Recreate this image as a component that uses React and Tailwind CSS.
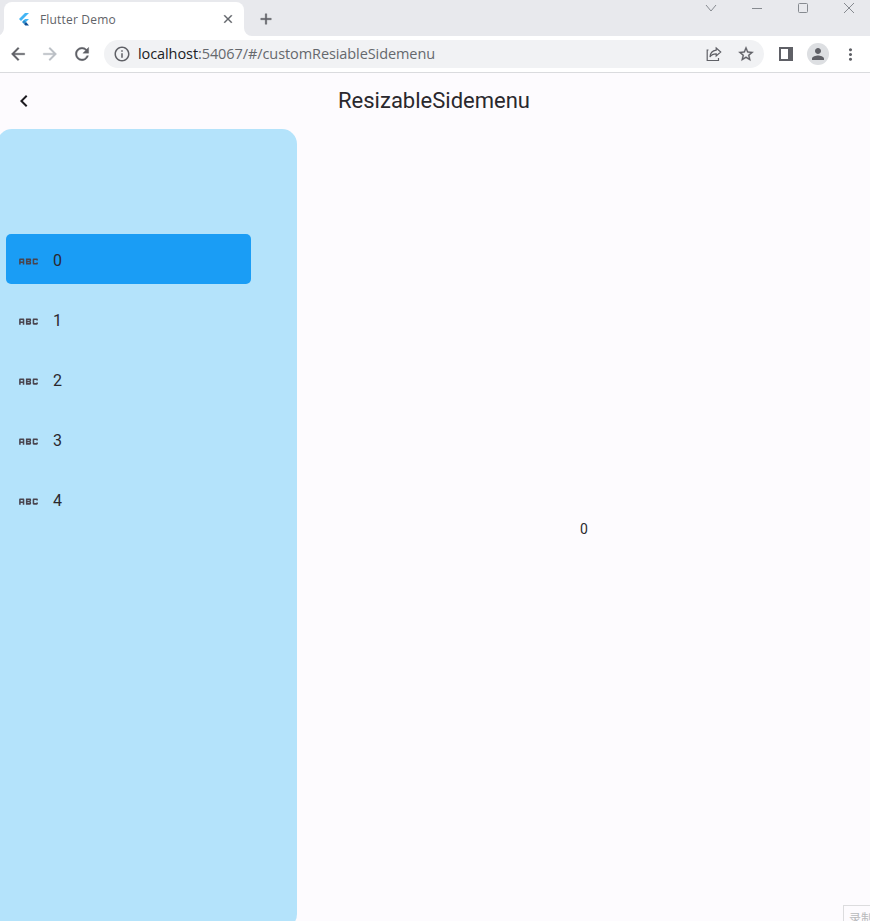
import React from "react";
import {
  MdAbc, MdAdd, MdArrowBack, MdArrowForward, MdChevronLeft, MdClose,
  MdInfoOutline, MdMoreVert, MdPerson, MdRefresh, MdStarBorder,
} from "react-icons/md";

const items = ["0", "1", "2", "3", "4"];

function FlutterLogo() {
  return (
    <svg className="h-[13px] w-[10px]" viewBox="0 0 10 13">
      <path d="M6 0h4L2 8 0 6z" fill="#42b5f5" />
      <path d="M6 6h4L6.5 9.5l-2-2z" fill="#42b5f5" />
      <path d="M3 9l2-2 2 2-2 2z" fill="#2a8fd0" />
      <path d="M5 11l2-2 3 3.500H6.300z" fill="#0d4f96" />
    </svg>
  );
}

function WindowControls() {
  return (
    <div className="flex h-4 w-[165px] items-center gap-[34px] text-[#868a90]">
      <svg className="h-4 w-3 shrink-0" viewBox="0 0 12 16" fill="none" stroke="currentColor">
        <path d="M1 5l5 6 5-6" />
      </svg>
      <svg className="h-4 w-3 shrink-0" viewBox="0 0 12 16" fill="none" stroke="currentColor">
        <path d="M1 8.500h10" />
      </svg>
      <svg className="h-4 w-3 shrink-0" viewBox="0 0 12 16" fill="none" stroke="currentColor">
        <rect x="1.500" y="3.500" width="9" height="9" rx="1" />
      </svg>
      <svg className="h-4 w-3 shrink-0" viewBox="0 0 12 16" fill="none" stroke="currentColor">
        <path d="M1 3l10 10M11 3L1 13" />
      </svg>
    </div>
  );
}

function TabStrip() {
  return (
    <div className="flex h-9 shrink-0 items-start bg-[#e8e9ed]">
      <svg className="mt-7 h-2 w-1 shrink-0" viewBox="4 0 4 8">
        <path d="M8 0v8H0a8 8 0 0 0 8-8z" fill="#fff" />
      </svg>
      <div className="mt-0.5 flex h-[34px] w-60 shrink-0 items-center rounded-t-lg bg-white pl-[15px] pr-[9px]">
        <FlutterLogo />
        <span className="ml-[11px] mt-0.5 whitespace-nowrap font-['Open_Sans','Noto_Sans',sans-serif] text-[12px] tracking-[0.18px] text-[#5f6368]">
          Flutter Demo
        </span>
        <MdClose className="ml-auto size-[14px] stroke-[0.6] text-[#5f6368] [&_[fill=none]]:hidden" />
      </div>
      <svg className="mt-7 h-2 w-2 shrink-0" viewBox="0 0 8 8">
        <path d="M0 0v8h8a8 8 0 0 1-8-8z" fill="#fff" />
      </svg>
      <MdAdd className="ml-[5px] mt-[10px] size-[18px] stroke-[0.5] text-[#5f6066] [&_[fill=none]]:hidden" />
      <div className="ml-auto">
        <WindowControls />
      </div>
    </div>
  );
}

function Toolbar() {
  return (
    <div className="flex h-[37px] shrink-0 items-center border-b border-[#dadbde] bg-white pl-2 text-[#5f6066]">
      <MdArrowBack className="size-5 stroke-[0.4] [&_[fill=none]]:hidden" />
      <MdArrowForward className="ml-3 size-5 stroke-[0.4] text-[#babec4] [&_[fill=none]]:hidden" />
      <MdRefresh className="ml-3 size-5 stroke-[0.4] [&_[fill=none]]:hidden" />
      <div className="ml-3 flex h-7 w-[660px] items-center rounded-full bg-[#f1f2f4] pl-[9px] pr-[9px]">
        <MdInfoOutline className="size-[18px]" />
        <span className="ml-[7px] whitespace-nowrap font-['Open_Sans','Noto_Sans',sans-serif] text-[14.500px] tracking-[-0.085px] text-[#65686d]">
          <span className="text-[#202124]">localhost</span>:54067/#/customResiableSidemenu
        </span>
        <svg className="ml-auto h-4 w-4" viewBox="0 0 16 16" fill="none" stroke="currentColor" strokeWidth="1.200">
          <path d="M2.500 4H1.200v10.500h11.300V12" />
          <path d="M10.200 2l4.500 4-4.500 4V7.900C7.400 7.900 5.300 8.800 4 11c.2-3.600 2.400-6.300 6.200-6.800z" />
        </svg>
        <MdStarBorder className="ml-[15px] size-[18px] stroke-[0.4] [&_[fill=none]]:hidden" />
      </div>
      <svg className="ml-[15px] h-[14px] w-[14px]" viewBox="0 0 14 14">
        <path d="M0 0h14v14H0zM2 2v10h7V2z" fill="currentColor" fillRule="evenodd" />
      </svg>
      <div className="ml-[14px] flex size-[22px] items-center justify-center rounded-full bg-[#dddfe2]">
        <MdPerson className="size-[18px]" />
      </div>
      <MdMoreVert className="ml-[12px] size-[19px]" />
    </div>
  );
}

export default function App() {
  return (
    <div className="relative flex h-[921px] w-[870px] flex-col overflow-hidden bg-[#fdfbfe] font-[Roboto,sans-serif] text-[#2a282d]">
      <TabStrip />
      <Toolbar />
      <header className="grid h-14 shrink-0 grid-cols-[48px_1fr_50px] items-center">
        <MdChevronLeft className="mx-auto size-6 text-[#1d1b20]" />
        <h1 className="text-center text-[22px] leading-7">ResizableSidemenu</h1>
      </header>
      <main className="flex h-[800px] shrink-0">
        <nav className="-ml-[3px] flex w-[300px] shrink-0 flex-col gap-[10px] rounded-[15px] bg-[#b4e3fb] pl-[9px] pt-[105px]">
          {items.map((label, i) => (
            <button
              key={label}
              className={`flex h-[50px] w-[245px] items-center rounded-[5px] pl-[10px] text-left ${i === 0 ? "bg-[#1a9df5]" : ""}`}
            >
              <MdAbc className="mt-1 size-[25px] text-[#49454f]" />
              <span className="ml-3 mt-1 text-[16px]">{label}</span>
            </button>
          ))}
        </nav>
        <section className="flex flex-1 items-center justify-center pl-px text-[14px]">
          <span>0</span>
        </section>
      </main>
      <div className="absolute left-[843px] top-[905px] h-8 w-16 whitespace-nowrap border border-[#dcdcde] pl-[5px] pt-[4px] font-['Noto_Sans_CJK_SC',sans-serif] text-[12px] leading-4 text-[#b8b9bb]">
        录制
      </div>
    </div>
  );
}
